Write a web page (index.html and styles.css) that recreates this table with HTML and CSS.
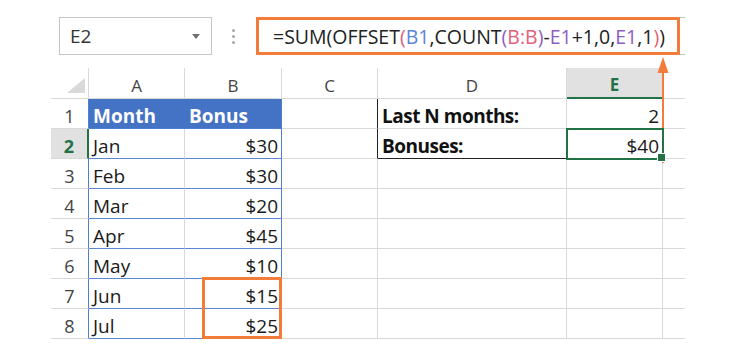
FILE: index.html
```html
<!DOCTYPE html>
<html lang="en">
<head>
<meta charset="utf-8">
<title>OFFSET SUM</title>
<link rel="stylesheet" href="styles.css">
</head>
<body>
<div class="app">
  <div class="toolbar">
    <div class="namebox"><span class="name">E2</span><span class="caret"></span></div>
    <div class="dots"><i></i><i></i><i></i></div>
    <div class="formula"><span>=SUM(OFFSET<span class="k-pink">(</span><span class="k-blue">B1</span>,COUNT<span class="k-purple">(</span><span class="k-pink">B:B</span><span class="k-purple">)</span>-<span class="k-purple">E1</span>+1,0,<span class="k-purple">E1</span>,1<span class="k-pink">)</span>)</span></div>
    <div class="formula-tail"></div>
  </div>

  <div class="sheet">
    <div class="c corner"><span class="tri"></span></div>
    <div class="c hd">A</div>
    <div class="c hd">B</div>
    <div class="c hd">C</div>
    <div class="c hd">D</div>
    <div class="c hd cur-col">E</div>
    <div class="c hd last"></div>

    <div class="c rh rh-t">1</div>
    <div class="c th">Month</div>
    <div class="c th th-b">Bonus</div>
    <div class="c bl-r"></div>
    <div class="c strong">Last N months:</div>
    <div class="c num bl-r">2</div>
    <div class="c last"></div>

    <div class="c rh cur-row">2</div>
    <div class="c ta">Jan</div>
    <div class="c num tb">$30</div>
    <div class="c bl-r"></div>
    <div class="c strong bl-b">Bonuses:</div>
    <div class="c num sel">$40</div>
    <div class="c last"></div>

    <div class="c rh rh-t">3</div>
    <div class="c ta">Feb</div>
    <div class="c num tb">$30</div>
    <div class="c"></div>
    <div class="c"></div>
    <div class="c"></div>
    <div class="c last"></div>

    <div class="c rh rh-t">4</div>
    <div class="c ta">Mar</div>
    <div class="c num tb">$20</div>
    <div class="c"></div>
    <div class="c"></div>
    <div class="c"></div>
    <div class="c last"></div>

    <div class="c rh rh-t">5</div>
    <div class="c ta">Apr</div>
    <div class="c num tb">$45</div>
    <div class="c"></div>
    <div class="c"></div>
    <div class="c"></div>
    <div class="c last"></div>

    <div class="c rh rh-t">6</div>
    <div class="c ta">May</div>
    <div class="c num tb">$10</div>
    <div class="c"></div>
    <div class="c"></div>
    <div class="c"></div>
    <div class="c last"></div>

    <div class="c rh rh-t">7</div>
    <div class="c ta">Jun</div>
    <div class="c num tb">$15</div>
    <div class="c"></div>
    <div class="c"></div>
    <div class="c"></div>
    <div class="c last"></div>

    <div class="c rh rh-t">8</div>
    <div class="c ta">Jul</div>
    <div class="c num tb">$25</div>
    <div class="c"></div>
    <div class="c"></div>
    <div class="c"></div>
    <div class="c last"></div>

    <div class="hl-range"></div>
  </div>

  <svg class="arrow" width="16" height="112" viewBox="0 0 16 112">
    <line x1="8" y1="14" x2="8" y2="108" stroke="#f47c3a" stroke-width="2"/>
    <polygon points="8,2 2.5,18 13.5,18" fill="#f47c3a"/>
  </svg>
</div>
</body>
</html>
```

FILE: styles.css
```css
* { box-sizing: border-box; }

body {
  margin: 0;
  background: #ffffff;
  font-family: "Open Sans", "Noto Sans", sans-serif;
  color: #1a1a1a;
}

.app {
  position: relative;
  width: 750px;
  height: 363px;
  padding: 17px 0 0 51px;
  overflow: hidden;
}

/* ---------- formula bar ---------- */
.toolbar {
  display: flex;
  height: 38px;
}

.namebox {
  margin-left: 8px;
  width: 153px;
  border: 1px solid #c6c6c6;
  display: flex;
  align-items: center;
  justify-content: space-between;
  padding: 0 11px 0 10px;
  font-size: 19px;
  color: #333;
}

.caret {
  width: 0;
  height: 0;
  border-left: 4.5px solid transparent;
  border-right: 4.5px solid transparent;
  border-top: 5px solid #707070;
}

.dots {
  width: 3px;
  margin-left: 20px;
  display: flex;
  flex-direction: column;
  justify-content: center;
  gap: 3px;
}

.dots i {
  display: block;
  width: 3px;
  height: 3px;
  border-radius: 50%;
  background: #a8a8a8;
}

.formula {
  margin-left: 21px;
  width: 424px;
  border: 3px solid #f47c3a;
  display: flex;
  align-items: center;
  padding-left: 14px;
  font-size: 19.5px;
  color: #222;
  white-space: nowrap;
}

.k-pink { color: #e2607a; }
.k-blue { color: #5a86d6; }
.k-purple { color: #8d5ec4; }

.formula-tail {
  width: 5px;
  border-top: 1px solid #c8c8c8;
  border-bottom: 1px solid #c8c8c8;
}

/* ---------- sheet grid ---------- */
.sheet {
  position: relative;
  margin-top: 13px;
  width: 634px;
  display: grid;
  grid-template-columns: 38px 96px 97px 96px 189px 96px 22px;
  grid-template-rows: 31px repeat(8, 30px);
}

.c {
  position: relative;
  display: flex;
  align-items: flex-end;
  padding: 0 4px 0 4px;
  border-right: 1px solid #d9d9d9;
  border-bottom: 1px solid #d9d9d9;
  font-size: 19px;
  line-height: 24px;
  white-space: nowrap;
}

.c.last { border-right: none; }

.corner {
  justify-content: flex-end;
  padding: 0 3px 5px 0;
}

.tri {
  width: 18px;
  height: 15px;
  background: #d9d9d9;
  clip-path: polygon(100% 0, 100% 100%, 0 100%);
}

.hd {
  justify-content: center;
  font-size: 17px;
  line-height: 20px;
  padding-bottom: 2px;
  color: #444;
}

.rh {
  justify-content: center;
  font-size: 18px;
  color: #444;
}

.rh-t { border-right-color: #4f7fd0; }

.cur-col {
  background: #e1e1e1;
  border-bottom: 2px solid #217346;
  color: #217346;
  font-weight: 700;
}

.cur-row {
  background: #e1e1e1;
  border-right: 2px solid #217346;
  color: #217346;
  font-weight: 700;
}

.num { justify-content: flex-end; padding-right: 3px; }

/* table A1:B8 */
.th {
  background: #4472c4;
  color: #ffffff;
  font-weight: 700;
  border-right-color: #4472c4;
  border-bottom-color: #4f7fd0;
}

.th-b { border-right-color: #4f7fd0; }

.ta { border-bottom-color: #5a86d4; }

.tb {
  border-bottom-color: #5a86d4;
  border-right-color: #4f7fd0;
}

/* D1:E2 block */
.strong { font-weight: 700; color: #111; letter-spacing: -0.5px; }
.bl-r { border-right-color: #222; }
.bl-b { border-bottom-color: #222; }

.sel {
  z-index: 2;
  outline: 2px solid #217346;
  outline-offset: -1px;
}

.sel::after {
  content: "";
  position: absolute;
  right: -4px;
  bottom: -4px;
  width: 7px;
  height: 7px;
  background: #217346;
  border: 1px solid #ffffff;
}

/* annotations */
.hl-range {
  position: absolute;
  left: 151px;
  top: 209px;
  width: 80px;
  height: 62px;
  border: 3px solid #f47c3a;
}

.arrow {
  position: absolute;
  z-index: 1;
  left: 655px;
  top: 55px;
}
```
